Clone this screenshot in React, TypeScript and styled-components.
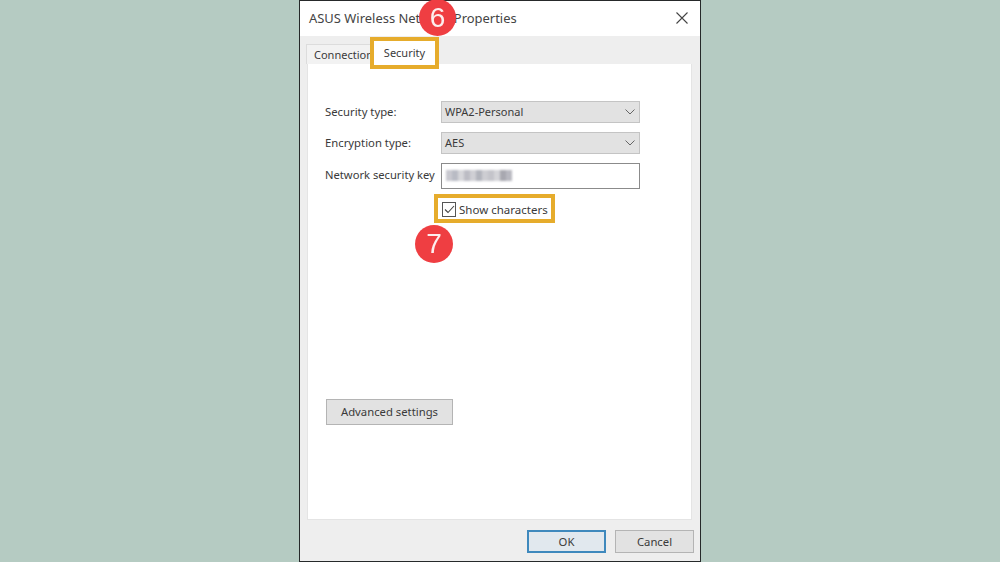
import React from 'react'
import styled, {createGlobalStyle} from 'styled-components'

const GlobalStyle = createGlobalStyle`
  html, body {
    margin: 0;
    padding: 0;
    background: #b5cbc2;
  }
  body {
    font-family: "Noto Sans", "Open Sans", sans-serif;
  }
`

const Page = styled.div`
  width: 1000px;
  height: 562px;
  display: flex;
  justify-content: center;
  background: #b5cbc2;
  overflow: hidden;
`

const Dialog = styled.div`
  position: relative;
  width: 402px;
  height: 562px;
  box-sizing: border-box;
  border: 1px solid #26292a;
  display: flex;
  flex-direction: column;
  background: #eeeeee;
  color: #3a3a3a;
  filter: blur(0.3px);
`

const TitleBar = styled.div`
  height: 35px;
  box-sizing: border-box;
  flex: none;
  background: #ffffff;
  display: flex;
  align-items: center;
  justify-content: space-between;
  padding: 0 12px 2px 9px;
`

const Title = styled.span`
  font-size: 12.95px;
  color: #444;
`

const TabStrip = styled.div`
  height: 28px;
  flex: none;
  display: flex;
  align-items: flex-end;
  padding-left: 6px;
  position: relative;
  z-index: 1;
`

const Tab = styled.div`
  width: 65px;
  height: 20px;
  box-sizing: border-box;
  border: 1px solid #dcdcdc;
  border-bottom: none;
  background: #f2f2f2;
  font-size: 11px;
  line-height: 20px;
  padding-left: 7px;
  white-space: nowrap;
`

const ActiveTab = styled.div`
  position: relative;
  width: 69px;
  height: 32px;
  margin: 0 0 -5px -1px;
  box-sizing: border-box;
  border: 4px solid #e6ac2c;
  background: #ffffff;
  font-size: 11px;
  line-height: 24px;
  text-align: center;
`

const Panel = styled.div`
  flex: 1;
  margin: 0 8px 0 7px;
  padding: 37px 17px 0;
  background: #ffffff;
  border: 1px solid #e4e4e4;
  border-top: none;
  display: flex;
  flex-direction: column;
  align-items: flex-start;
`

const Form = styled.div`
  display: grid;
  grid-template-columns: 116px 199px;
  row-gap: 9px;
  align-items: center;
`

const Label = styled.label`
  font-size: 11.3px;
  white-space: nowrap;
  padding-bottom: 1px;
`

const KeyLabel = styled(Label)`
  font-size: 11.2px;
  padding-bottom: 3px;
`

const Select = styled.div`
  height: 22px;
  box-sizing: border-box;
  background: #e2e2e2;
  border: 1px solid #c4c4c4;
  display: flex;
  align-items: center;
  justify-content: space-between;
  padding: 0 4px 1px 3px;
  font-size: 11px;
`

const KeyInput = styled.div`
  height: 26px;
  box-sizing: border-box;
  background: #ffffff;
  border: 1px solid #8b8b8b;
  display: flex;
  align-items: center;
  padding: 0 0 2px 4px;
`

const BlurredKey = styled.div`
  display: flex;
  filter: blur(1.2px);
`

const KeyChunk = styled.span<{$shade: string}>`
  width: 6px;
  height: 11px;
  background: ${p => p.$shade};
`

const CheckRow = styled.div`
  margin: 5px 0 0 109px;
  height: 29px;
  width: 121px;
  box-sizing: border-box;
  border: 4px solid #e6ac2c;
  display: flex;
  align-items: center;
  gap: 3px;
  padding: 1px 0 0 4px;
  font-size: 11.5px;
  white-space: nowrap;
`

const CheckBox = styled.span`
  width: 14px;
  height: 15px;
  box-sizing: border-box;
  border: 1px solid #555;
  display: flex;
  align-items: center;
  justify-content: center;
  flex: none;
`

const Button = styled.div<{$primary?: boolean}>`
  box-sizing: border-box;
  display: flex;
  align-items: center;
  justify-content: center;
  font-size: 11.3px;
  padding-bottom: 1px;
  background: ${p => (p.$primary ? '#e1e8ee' : '#e2e2e2')};
  border: ${p => (p.$primary ? '2px solid #3f89bd' : '1px solid #b4b4b4')};
`

const AdvancedButton = styled(Button)`
  width: 127px;
  height: 26px;
  margin: 176px 0 0 1px;
`

const Footer = styled.div`
  height: 41px;
  box-sizing: border-box;
  flex: none;
  display: flex;
  justify-content: flex-end;
  align-items: flex-start;
  gap: 9px;
  padding: 10px 6px 0 0;
`

const FooterButton = styled(Button)`
  width: 79px;
  height: 23px;
`

const Callout = styled.div<{$top: number; $left: number; $size: number}>`
  position: absolute;
  top: ${p => p.$top}px;
  left: ${p => p.$left}px;
  width: ${p => p.$size}px;
  height: ${p => p.$size}px;
  border-radius: 50%;
  background: #ef3e42;
  color: #fdeeee;
  font-family: "Liberation Sans", Arial, sans-serif;
  font-size: 28px;
  display: flex;
  align-items: center;
  justify-content: center;
  z-index: 2;
`

const Chevron = () => (
  <svg width="10" height="6" viewBox="0 0 10 6" fill="none" stroke="#666" strokeWidth="1">
    <path d="M.5.5L5 5 9.5.5" />
  </svg>
)

const keyShades = ['#c9c9d0', '#b9bbc4', '#d6d6da', '#bcbcc4', '#cfcfd4', '#b2b4bc', '#cdcdd2', '#c4c4ca', '#d4d4d8', '#a8a8b0', '#b8b8c0']

export default function App() {
  return (
    <Page>
      <GlobalStyle />
      <Dialog>
        <TitleBar>
          <Title>ASUS Wireless Network Properties</Title>
          <svg width="12" height="12" viewBox="0 0 12 12" stroke="#444" strokeWidth="1.1">
            <path d="M.5.5l11 11M11.5.5l-11 11" />
          </svg>
        </TitleBar>
        <TabStrip>
          <Tab>Connection</Tab>
          <ActiveTab>Security</ActiveTab>
        </TabStrip>
        <Panel>
          <Form>
            <Label>Security type:</Label>
            <Select>
              WPA2-Personal
              <Chevron />
            </Select>
            <Label>Encryption type:</Label>
            <Select>
              AES
              <Chevron />
            </Select>
            <KeyLabel>Network security key</KeyLabel>
            <KeyInput>
              <BlurredKey>
                {keyShades.map((shade, i) => (
                  <KeyChunk key={i} $shade={shade} />
                ))}
              </BlurredKey>
            </KeyInput>
          </Form>
          <CheckRow>
            <CheckBox>
              <svg width="11" height="9" viewBox="0 0 11 9" fill="none" stroke="#444" strokeWidth="1.1">
                <path d="M1 4.5L4 7.5 10 1" />
              </svg>
            </CheckBox>
            Show characters
          </CheckRow>
          <AdvancedButton>Advanced settings</AdvancedButton>
        </Panel>
        <Footer>
          <FooterButton $primary>OK</FooterButton>
          <FooterButton>Cancel</FooterButton>
        </Footer>
        <Callout $top={-2} $left={119} $size={37}>6</Callout>
        <Callout $top={224} $left={115} $size={38}>7</Callout>
      </Dialog>
    </Page>
  )
}
